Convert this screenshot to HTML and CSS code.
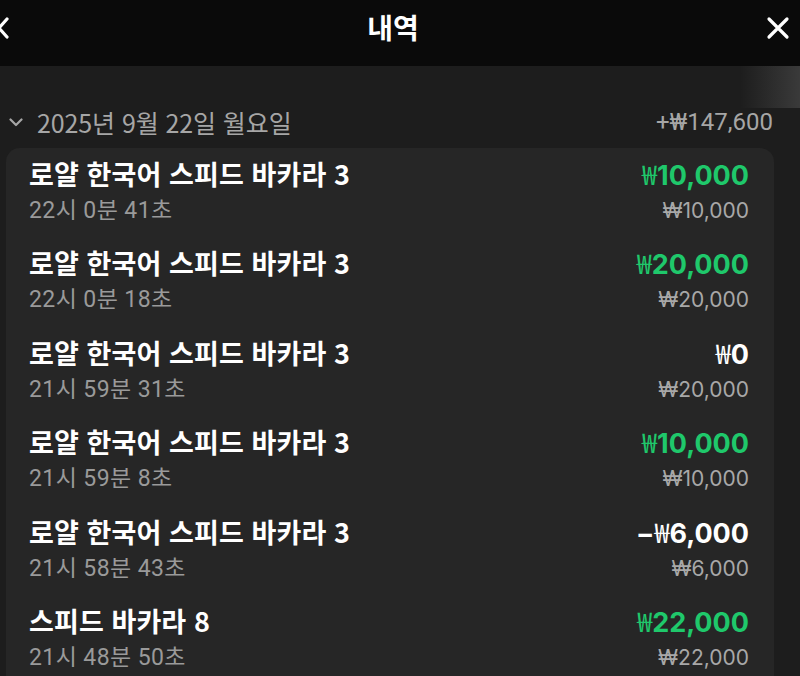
FILE: index.html
```html
<!DOCTYPE html>
<html lang="ko">
  <head>
    <meta charset="UTF-8" />
    <meta name="viewport" content="width=device-width, initial-scale=1.0" />
    <title>내역</title>
    <link rel="stylesheet" href="styles.css">
  </head>
  <body>
    <header class="topbar">
      <button class="icon-btn back" type="button" aria-label="뒤로">
        <svg width="14" height="24" viewBox="0 0 14 24"><path d="M11 3 L3 12 L11 21" fill="none" stroke="#fff" stroke-width="3.2" stroke-linecap="round" stroke-linejoin="round"/></svg>
      </button>
      <h1>내역</h1>
      <button class="icon-btn close" type="button" aria-label="닫기">
        <svg width="24" height="24" viewBox="0 0 24 24"><path d="M3 3 L21 21 M21 3 L3 21" fill="none" stroke="#fff" stroke-width="3.2" stroke-linecap="round"/></svg>
      </button>
    </header>

    <main class="content">
      <div class="edge-glow"></div>

      <div class="day">
        <div class="day-label">
          <svg width="14" height="9" viewBox="0 0 14 9"><path d="M1.5 1.5 L7 7 L12.5 1.5" fill="none" stroke="#a6a6a6" stroke-width="2.2" stroke-linecap="round" stroke-linejoin="round"/></svg>
          <span>2025년 9월 22일 월요일</span>
        </div>
        <div class="day-total">+₩147,600</div>
      </div>

      <div class="card">
        <div class="row">
          <div class="game">로얄 한국어 스피드 바카라 3</div>
          <div class="amount win"><span class="won">₩</span>10,000</div>
          <div class="time">22시 0분 41초</div>
          <div class="stake">₩10,000</div>
        </div>
        <div class="row">
          <div class="game">로얄 한국어 스피드 바카라 3</div>
          <div class="amount win"><span class="won">₩</span>20,000</div>
          <div class="time">22시 0분 18초</div>
          <div class="stake">₩20,000</div>
        </div>
        <div class="row">
          <div class="game">로얄 한국어 스피드 바카라 3</div>
          <div class="amount"><span class="won">₩</span>0</div>
          <div class="time">21시 59분 31초</div>
          <div class="stake">₩20,000</div>
        </div>
        <div class="row">
          <div class="game">로얄 한국어 스피드 바카라 3</div>
          <div class="amount win"><span class="won">₩</span>10,000</div>
          <div class="time">21시 59분 8초</div>
          <div class="stake">₩10,000</div>
        </div>
        <div class="row">
          <div class="game">로얄 한국어 스피드 바카라 3</div>
          <div class="amount">−<span class="won">₩</span>6,000</div>
          <div class="time">21시 58분 43초</div>
          <div class="stake">₩6,000</div>
        </div>
        <div class="row">
          <div class="game">스피드 바카라 8</div>
          <div class="amount win"><span class="won">₩</span>22,000</div>
          <div class="time">21시 48분 50초</div>
          <div class="stake">₩22,000</div>
        </div>
      </div>
    </main>
  </body>
</html>
```

FILE: styles.css
```css
html,
body {
  margin: 0;
  height: 100%;
}

body {
  font-family: "Noto Sans CJK KR", "Noto Sans", sans-serif;
  background-color: #1d1d1d;
  color: #fff;
  overflow: hidden;
}

.topbar {
  height: 66px;
  background-color: #0a0a0a;
  display: flex;
  align-items: center;
  justify-content: space-between;
  padding: 0 10px 0 0;
  box-sizing: border-box;
}

.topbar h1 {
  margin: 0 0 0 10px;
  font-size: 28px;
  font-weight: 700;
  line-height: 1;
  padding-bottom: 12px;
}

.icon-btn {
  background: none;
  border: none;
  padding: 0;
  display: flex;
  cursor: pointer;
  margin-bottom: 10px;
}

.back {
  margin-left: -4px;
}

.content {
  position: relative;
  padding: 34px 26px 0 6px;
}

.edge-glow {
  position: absolute;
  top: 0;
  right: 0;
  width: 60px;
  height: 42px;
  background: linear-gradient(to right, rgba(60, 60, 60, 0), #3a3a3a);
}

.day {
  display: flex;
  align-items: center;
  justify-content: space-between;
  height: 44px;
  margin-bottom: 4px;
  color: #a6a6a6;
  font-size: 24px;
}

.day-label {
  display: flex;
  align-items: center;
  gap: 14px;
  padding-left: 3px;
}

.day-label span {
  font-size: 25px;
  letter-spacing: -0.1px;
}

.day-total {
  margin-right: -26px;
  padding-right: 27px;
  font-family: "Roboto", "Noto Sans CJK KR", sans-serif;
}

.card {
  background-color: #262626;
  border-radius: 14px;
  padding-bottom: 10px;
}

.row {
  display: grid;
  grid-template-columns: 1fr auto;
  grid-template-rows: 34px 36px;
  padding: 9px 25px 10.4px 23px;
}

.game {
  font-size: 27px;
  font-weight: 700;
  line-height: 34px;
  letter-spacing: 0.1px;
}

.time {
  font-family: "Roboto", "Noto Sans CJK KR", sans-serif;
  font-size: 23px;
  line-height: 40px;
  letter-spacing: 0.4px;
  color: #9a9a9a;
}

.amount,
.stake {
  text-align: right;
  font-family: "Inter", "Noto Sans CJK KR", sans-serif;
}

.amount {
  font-size: 27px;
  font-weight: 700;
  line-height: 34px;
  color: #fff;
}

.won {
  font-family: "Noto Sans CJK KR", sans-serif;
  font-weight: 400;
}

.amount.win {
  color: #1fc86b;
}

.stake {
  font-size: 21px;
  line-height: 39px;
  color: #a8a8a8;
}
```
